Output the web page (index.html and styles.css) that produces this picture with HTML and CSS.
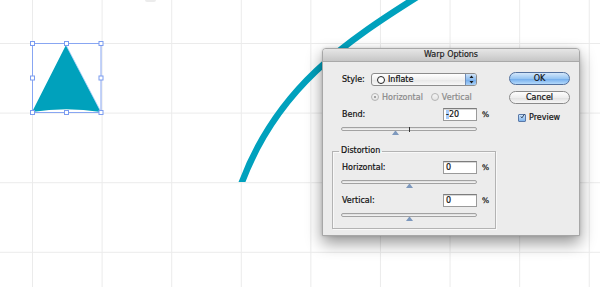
FILE: index.html
```html
<!DOCTYPE html>
<html lang="en">
<head>
	<meta charset="UTF-8">
	<title>Warp Options</title>
	<link rel="stylesheet" href="styles.css">
</head>
<body>
	<div class="artboard">
		<svg class="art" width="600" height="287" viewBox="0 0 600 287">
			<rect class="nub" x="145" y="-4" width="11" height="6" rx="2"/>
			<clipPath id="above"><rect x="0" y="0" width="600" height="182"/></clipPath>
			<path class="arc" clip-path="url(#above)" d="M240.5 186 C 276 88, 345 42, 425 -8"/>
			<path class="shape" d="M32 112 L66 45 L101 112 Q66 106.5 32 112 Z"/>
			<path class="shape-edge" d="M66 45 L101 112"/>
			<rect class="bbox" x="32.5" y="43.5" width="68.5" height="69"/>
			<!-- handles: corners and midpoints -->
			<rect class="handle" x="30.5" y="41.5" width="4" height="4"/>
			<rect class="handle" x="64.5" y="41.5" width="4" height="4"/>
			<rect class="handle" x="99" y="41.5" width="4" height="4"/>
			<rect class="handle" x="30.5" y="76" width="4" height="4"/>
			<rect class="handle" x="99" y="76" width="4" height="4"/>
			<rect class="handle" x="30.5" y="110.5" width="4" height="4"/>
			<rect class="handle" x="64.5" y="110.5" width="4" height="4"/>
			<rect class="handle" x="99" y="110.5" width="4" height="4"/>
		</svg>

		<div class="dialog">
			<div class="titlebar">Warp Options</div>
			<div class="dialog-body">
				<div class="settings">
					<div class="row style-row">
						<span class="label">Style:</span>
						<div class="select">
							<span class="select-icon"></span>
							<span class="select-text">Inflate</span>
							<span class="stepper">
								<svg width="5" height="9" viewBox="0 0 5 9"><path d="M2.5 0.5 L4.5 3 L0.5 3 Z M0.5 6 L4.5 6 L2.5 8.5 Z" fill="#1a1a1a"/></svg>
							</span>
						</div>
					</div>
					<div class="row radios">
						<span class="radio checked"><span class="radio-dot"></span>Horizontal</span>
						<span class="radio"><span class="radio-dot"></span>Vertical</span>
					</div>
					<div class="row field-row">
						<span class="label">Bend:</span>
						<span class="input"><span class="selection">-</span>20</span>
						<span class="pct">%</span>
					</div>
					<div class="slider">
						<div class="track"><i class="tick"></i></div>
						<i class="thumb" style="left: 40%"></i>
					</div>

					<fieldset class="group">
						<legend>Distortion</legend>
						<div class="row field-row first">
							<span class="label">Horizontal:</span>
							<span class="input">0</span>
							<span class="pct">%</span>
						</div>
						<div class="slider">
							<div class="track"></div>
							<i class="thumb" style="left: 50%"></i>
						</div>
						<div class="row field-row">
							<span class="label">Vertical:</span>
							<span class="input">0</span>
							<span class="pct">%</span>
						</div>
						<div class="slider">
							<div class="track"></div>
							<i class="thumb" style="left: 50%"></i>
						</div>
					</fieldset>
				</div>

				<div class="buttons">
					<div class="btn btn-ok">OK</div>
					<div class="btn">Cancel</div>
					<div class="check">
						<span class="box">
							<svg width="9" height="9" viewBox="0 0 9 9"><path d="M1.5 4.5 L3.5 7 L8 0.5" fill="none" stroke="#10203a" stroke-width="1.4"/></svg>
						</span>
						Preview
					</div>
				</div>
			</div>
		</div>
	</div>
</body>
</html>
```

FILE: styles.css
```css
*{
    margin: 0;
    padding: 0;
    box-sizing: border-box;
}
body{
    width: 600px;
    height: 287px;
    overflow: hidden;
    font-family: "DejaVu Sans", sans-serif;
    font-size: 8px;
    color: #111;
}
.artboard{
    position: relative;
    width: 600px;
    height: 287px;
    background-color: #fff;
    background-image:
        linear-gradient(to right, #ebebeb 1px, transparent 1px),
        linear-gradient(to bottom, #ebebeb 1px, transparent 1px);
    background-size: 69.6px 69.6px;
    background-position: 32px 43px;
}
.art{
    position: absolute;
    left: 0;
    top: 0;
}
.nub{
    fill: #ececec;
}
.arc{
    fill: none;
    stroke: #00a1bd;
    stroke-width: 6.5;
}
.shape{
    fill: #00a1bc;
}
.shape-edge{
    fill: none;
    stroke: #b8d4ff;
    stroke-width: 0.8;
}
.bbox{
    fill: none;
    stroke: #88a6f2;
    stroke-width: 1;
}
.handle{
    fill: #fff;
    stroke: #7b9cf0;
    stroke-width: 1;
}

/* dialog */
.dialog{
    position: absolute;
    left: 322px;
    top: 48px;
    width: 258px;
    height: 188px;
    background: #ececec;
    border: 1px solid #a7a7a7;
    border-radius: 4px 4px 0 0;
    box-shadow: 0 7px 16px rgba(0, 0, 0, .42), 0 0 3px rgba(0, 0, 0, .15);
    -webkit-text-stroke: 0.2px currentColor;
}
.titlebar{
    height: 13px;
    line-height: 12px;
    text-align: center;
    color: #222;
    background: linear-gradient(#e6e6e6, #c6c6c6);
    border-bottom: 1px solid #a9a9a9;
    border-radius: 3px 3px 0 0;
}
.dialog-body{
    display: flex;
    gap: 9px;
    padding-left: 9px;
}
.settings{
    width: 168px;
    display: flex;
    flex-direction: column;
}
.row{
    display: flex;
    align-items: center;
    padding-left: 10px;
}
.label{
    width: 101px;
}
.style-row{
    height: 13px;
    margin-top: 11px;
}
.style-row .label{
    width: 29px;
}
.select{
    width: 106px;
    height: 13px;
    display: flex;
    align-items: center;
    border: 1px solid #8c8c8c;
    border-radius: 3px;
    background: linear-gradient(#fff, #f0f0f0 50%, #e6e6e6 51%, #f7f7f7);
    overflow: hidden;
}
.select-icon{
    width: 8px;
    height: 8px;
    margin-left: 5px;
    border: 1px solid #222;
    border-radius: 50%;
    background: #fff;
}
.select-text{
    margin-left: 3px;
    flex: 1;
    line-height: 11px;
}
.stepper{
    width: 11px;
    height: 100%;
    display: flex;
    align-items: center;
    justify-content: center;
    border-left: 1px solid #6f8db8;
    background: linear-gradient(#cfe3f8, #8cbcef 50%, #6fa9ea 51%, #a9d1f8);
}
.radios{
    height: 12px;
    margin-top: 5px;
    padding-left: 39px;
    gap: 8px;
    color: #8a8a8a;
}
.radio{
    display: flex;
    align-items: center;
    gap: 3px;
}
.radio-dot{
    width: 8px;
    height: 8px;
    border: 1px solid #b4b4b4;
    border-radius: 50%;
    background: linear-gradient(#f4f4f4, #e4e4e4);
    display: flex;
    align-items: center;
    justify-content: center;
}
.radio.checked .radio-dot::after{
    content: "";
    width: 2px;
    height: 2px;
    border-radius: 50%;
    background: #8a8a8a;
}
.field-row{
    height: 13px;
    margin-top: 5px;
}
.input{
    width: 34px;
    height: 13px;
    padding-left: 2px;
    line-height: 11px;
    background: #fff;
    border: 1px solid #9a9a9a;
    border-top-color: #7d7d7d;
    box-shadow: inset 0 1px 0 #d8d8d8;
}
.selection{
    background: #a9cdfa;
}
.pct{
    margin-left: 5px;
    font-size: 7.5px;
}
.slider{
    position: relative;
    height: 8px;
    width: 136px;
    margin: 6px 0 0 9px;
}
.track{
    position: relative;
    height: 4px;
    border: 1px solid #a2a2a2;
    border-radius: 2px;
    background: linear-gradient(#dcdcdc, #f6f6f6);
}
.tick{
    position: absolute;
    left: 67px;
    top: -1px;
    width: 1px;
    height: 5px;
    background: #333;
}
.thumb{
    position: absolute;
    top: 4px;
    width: 7px;
    height: 4px;
    margin-left: -3px;
    border-left: 3px solid transparent;
    border-right: 3px solid transparent;
    border-bottom: 4px solid #7d98bd;
}

/* distortion group */
.group{
    margin: 11px 0 0 0;
    width: 164px;
    padding: 0 0 7px 9px;
    border: 1px solid #b3b3b3;
    box-shadow: inset 1px 1px 0 #f8f8f8, 1px 1px 0 #f8f8f8;
}
.group legend{
    margin-left: -3px;
    padding: 0 2px;
    line-height: 10px;
}
.group .row{
    padding-left: 0;
}
.group .field-row.first{
    margin-top: 5px;
}
.group .field-row{
    margin-top: 6px;
}
.group .slider{
    margin-left: -1px;
}

/* buttons */
.buttons{
    width: 61px;
    display: flex;
    flex-direction: column;
}
.btn{
    height: 13px;
    margin-top: 6px;
    line-height: 11px;
    text-align: center;
    border: 1px solid #8a8a8a;
    border-radius: 7px;
    background: linear-gradient(#fdfdfd, #eeeeee 50%, #e0e0e0 51%, #f6f6f6);
}
.btn-ok{
    margin-top: 10px;
    border-color: #52709e;
    background: linear-gradient(#d3e7fb, #98c6f3 50%, #6eaaec 51%, #b4d9fb);
}
.check{
    display: flex;
    align-items: center;
    gap: 3px;
    margin-top: 9px;
    padding-left: 9px;
}
.box{
    width: 8px;
    height: 8px;
    border: 1px solid #5a79a8;
    border-radius: 1px;
    background: linear-gradient(#cfe4fa, #7fb5ee);
    display: flex;
    align-items: center;
    justify-content: center;
}
.box svg{
    margin-top: -2px;
    margin-left: 1px;
}
```
